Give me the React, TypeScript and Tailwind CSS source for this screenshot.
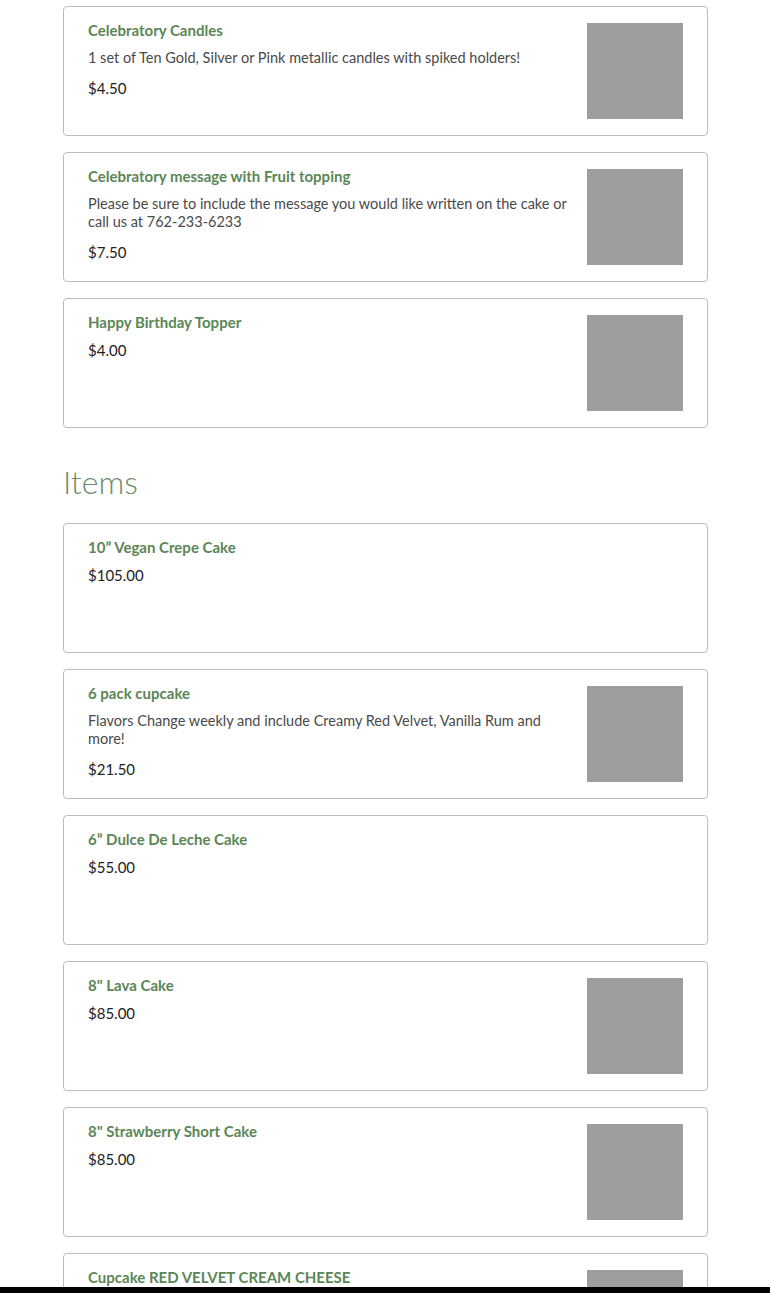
const addOns = [
    { name: 'Celebratory Candles', desc: '1 set of Ten Gold, Silver or Pink metallic candles with spiked holders!', price: '$4.50', img: true },
    { name: 'Celebratory message with Fruit topping', desc: 'Please be sure to include the message you would like written on the cake or call us at 762-233-6233', price: '$7.50', img: true },
    { name: 'Happy Birthday Topper', price: '$4.00', img: true },
];

const items = [
    { name: '10” Vegan Crepe Cake', price: '$105.00', img: false },
    { name: '6 pack cupcake', desc: 'Flavors Change weekly and include Creamy Red Velvet, Vanilla Rum and more!', price: '$21.50', img: true },
    { name: '6” Dulce De Leche Cake', price: '$55.00', img: false },
    { name: '8" Lava Cake', price: '$85.00', img: true },
    { name: '8" Strawberry Short Cake', price: '$85.00', img: true },
    { name: 'Cupcake RED VELVET CREAM CHEESE', price: '', img: true },
];

type Item = { name: string; desc?: string; price: string; img: boolean };

function ItemCard({ item }: { item: Item }) {
    return (
        <div className="flex shrink-0 min-h-[130px] border border-[#bdbdbd] rounded-[4px] bg-white pl-6 pr-6">
            <div className="flex-1 pt-[13px] pr-5">
                <div className="text-[15px] leading-[20px] font-bold text-[#5b8656] mb-[9px]">{item.name}</div>
                {item.desc && <p className="text-[14.5px] leading-[18px] text-[#4a4a4a] mb-[12px]">{item.desc}</p>}
                {item.price && <div className="text-[15px] leading-[18px] text-[#222]">{item.price}</div>}
            </div>
            {item.img && <div className="w-[96px] h-[96px] mt-[16px] shrink-0 bg-[#9e9e9e]" />}
        </div>
    );
}

export default function App() {
    return (
        <div className="h-[1293px] w-[770px] flex flex-col overflow-hidden bg-white" style={{ fontFamily: 'Lato, "Open Sans", sans-serif' }}>
            <div className="flex-1 overflow-hidden pl-[63px] pt-[6px] pr-[62px] flex flex-col gap-[16px]">
                {addOns.map((it) => (
                    <ItemCard key={it.name} item={it} />
                ))}
                <h2 className="text-[32px] leading-[40px] font-light text-[#6b8c66] mt-[18px] mb-[5px]">Items</h2>
                {items.map((it) => (
                    <ItemCard key={it.name} item={it} />
                ))}
            </div>
            <div className="h-[6px] bg-black shrink-0" />
        </div>
    );
}
